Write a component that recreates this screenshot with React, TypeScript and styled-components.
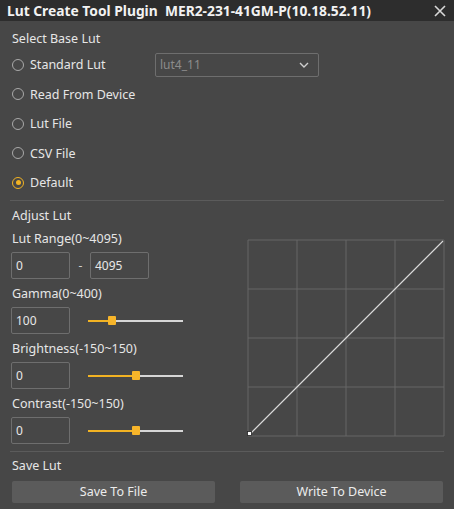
import React from "react";
import styled, { createGlobalStyle } from "styled-components";

const Global = createGlobalStyle`
  html, body { margin: 0; padding: 0; background: #474747; }
  body { font-family: "Noto Sans", "Open Sans", sans-serif; color: #e4e4e4; }
  * { box-sizing: border-box; }
`;

const Window = styled.div`
  width: 454px;
  height: 509px;
  background: #474747;
  display: flex;
  flex-direction: column;
  overflow: hidden;
`;

const TitleBar = styled.div`
  height: 21px;
  background: #2d2d2d;
  display: flex;
  align-items: center;
  justify-content: space-between;
  padding: 0 8px 0 7px;
`;

const Title = styled.div`
  font-size: 13.8px;
  font-weight: 700;
  color: #f2f2f2;
  white-space: pre;
`;

const Close = styled.div`
  width: 12px;
  height: 12px;
  display: flex;
  align-items: center;
  justify-content: center;
`;

const Body = styled.div`
  padding: 8px 10px 0 12px;
  display: flex;
  flex-direction: column;
`;

const SectionLabel = styled.div<{ $mt?: number }>`
  height: 20px;
  line-height: 20px;
  font-size: 12.5px;
  color: #e6e6e6;
  margin-top: ${(p) => p.$mt ?? 0}px;
`;

const RadioList = styled.div`
  display: flex;
  flex-direction: column;
  margin-top: 1px;
`;

const RadioRow = styled.div`
  height: 29.5px;
  display: grid;
  grid-template-columns: 143px 164px;
  align-items: center;
`;

const RadioLabel = styled.label`
  display: flex;
  align-items: center;
  gap: 6px;
  font-size: 12.5px;
  color: #e6e6e6;
`;

const RadioCircle = styled.span<{ $on?: boolean }>`
  width: 12px;
  height: 12px;
  border-radius: 50%;
  border: 1.5px solid ${(p) => (p.$on ? "#f2b323" : "#a9a9a9")};
  display: flex;
  align-items: center;
  justify-content: center;
  &::after {
    content: "";
    width: 5px;
    height: 5px;
    border-radius: 50%;
    background: ${(p) => (p.$on ? "#f2b323" : "transparent")};
  }
`;

const Combo = styled.div`
  height: 24px;
  border: 1px solid #6e6e6e;
  border-radius: 2px;
  display: flex;
  align-items: center;
  justify-content: space-between;
  padding: 0 9px 0 4px;
  font-size: 12px;
  color: #8c8c8c;
`;

const Separator = styled.div<{ $mt?: number }>`
  height: 1px;
  background: #5b5b5b;
  margin-top: ${(p) => p.$mt ?? 0}px;
  margin-left: -2px;
`;

const AdjustArea = styled.div`
  display: flex;
  justify-content: space-between;
  margin-top: 3px;
`;

const LeftCol = styled.div`
  display: flex;
  flex-direction: column;
  width: 200px;
`;

const FieldLabel = styled.div`
  height: 20px;
  line-height: 20px;
  font-size: 12.5px;
  color: #e6e6e6;
`;

const FieldRow = styled.div`
  display: flex;
  align-items: center;
  height: 27px;
  margin-top: 3.5px;
  margin-bottom: 4.5px;
`;

const NumBox = styled.div<{ $w?: number }>`
  width: ${(p) => p.$w ?? 59}px;
  height: 27px;
  border: 1px solid #6e6e6e;
  border-radius: 2px;
  padding-left: 4px;
  font-size: 12px;
  line-height: 25px;
  color: #e8e8e8;
  margin-left: -1px;
`;

const Dash = styled.span`
  width: 21px;
  text-align: center;
  font-size: 12px;
  color: #cfcfcf;
`;

const Slider = styled.div`
  position: relative;
  width: 95px;
  height: 9px;
  margin-left: 18px;
  display: flex;
  align-items: center;
`;

const Track = styled.div`
  width: 100%;
  height: 2px;
  background: #d6d6d6;
  display: flex;
`;

const Fill = styled.div`
  height: 2px;
  background: #f2b323;
`;

const Handle = styled.div`
  position: absolute;
  top: 0;
  width: 8px;
  height: 9px;
  margin-left: -4px;
  background: #f7b52a;
  border-radius: 1px;
`;

const Chart = styled.svg`
  display: block;
  margin-top: 10px;
  margin-right: -1px;
`;

const Buttons = styled.div`
  display: grid;
  grid-template-columns: 203px 203px;
  justify-content: space-between;
  margin-top: 5px;
  margin-right: 1px;
`;

const Button = styled.button`
  height: 22px;
  border: none;
  border-radius: 2px;
  background: #5b5b5b;
  color: #ececec;
  font-family: "Noto Sans", "Open Sans", sans-serif;
  font-size: 12.5px;
  padding: 0;
  line-height: 22px;
`;

function SliderCtl({ pct }: { pct: number }) {
  return (
    <Slider>
      <Track>
        <Fill style={{ width: `${pct}%` }} />
      </Track>
      <Handle style={{ left: `${pct}%` }} />
    </Slider>
  );
}

const radios = [
  { label: "Standard Lut", on: false, combo: true },
  { label: "Read From Device", on: false },
  { label: "Lut File", on: false },
  { label: "CSV File", on: false },
  { label: "Default", on: true },
];

export default function App() {
  const size = 196;
  const step = size / 4;
  return (
    <Window>
      <Global />
      <TitleBar>
        <Title>{"Lut Create Tool Plugin  MER2-231-41GM-P(10.18.52.11)"}</Title>
        <Close>
          <svg width="12" height="12" viewBox="0 0 12 12">
            <path d="M1 1L11 11M11 1L1 11" stroke="#d8d8d8" strokeWidth="1.6" />
          </svg>
        </Close>
      </TitleBar>
      <Body>
        <SectionLabel>Select Base Lut</SectionLabel>
        <RadioList>
          {radios.map((r) => (
            <RadioRow key={r.label}>
              <RadioLabel>
                <RadioCircle $on={r.on} />
                {r.label}
              </RadioLabel>
              {r.combo && (
                <Combo>
                  <span>lut4_11</span>
                  <svg width="10" height="6" viewBox="0 0 10 6">
                    <path d="M1 1L5 5L9 1" fill="none" stroke="#cfcfcf" strokeWidth="1.4" />
                  </svg>
                </Combo>
              )}
            </RadioRow>
          ))}
        </RadioList>
        <Separator $mt={2} />
        <SectionLabel $mt={5}>Adjust Lut</SectionLabel>
        <AdjustArea>
          <LeftCol>
            <FieldLabel>Lut Range(0~4095)</FieldLabel>
            <FieldRow>
              <NumBox>0</NumBox>
              <Dash>-</Dash>
              <NumBox $w={59}>4095</NumBox>
            </FieldRow>
            <FieldLabel>Gamma(0~400)</FieldLabel>
            <FieldRow>
              <NumBox>100</NumBox>
              <SliderCtl pct={25} />
            </FieldRow>
            <FieldLabel>Brightness(-150~150)</FieldLabel>
            <FieldRow>
              <NumBox>0</NumBox>
              <SliderCtl pct={50} />
            </FieldRow>
            <FieldLabel>Contrast(-150~150)</FieldLabel>
            <FieldRow>
              <NumBox>0</NumBox>
              <SliderCtl pct={50} />
            </FieldRow>
          </LeftCol>
          <Chart width={size + 2} height={size + 2} viewBox={`0 0 ${size + 2} ${size + 2}`}>
            {[0, 1, 2, 3, 4].map((i) => (
              <g key={i}>
                <line x1={1 + i * step} y1={1} x2={1 + i * step} y2={size + 1} stroke="#676767" strokeWidth="1" />
                <line x1={1} y1={1 + i * step} x2={size + 1} y2={1 + i * step} stroke="#676767" strokeWidth="1" />
              </g>
            ))}
            <line x1={2} y1={size} x2={size} y2={2} stroke="#dcdcdc" strokeWidth="1.1" />
            <rect x={0.5} y={size - 3.5} width={4} height={4} fill="#ffffff" stroke="#222" strokeWidth="0.8" />
          </Chart>
        </AdjustArea>
        <Separator $mt={2} />
        <SectionLabel $mt={4}>Save Lut</SectionLabel>
        <Buttons>
          <Button>Save To File</Button>
          <Button>Write To Device</Button>
        </Buttons>
      </Body>
    </Window>
  );
}
